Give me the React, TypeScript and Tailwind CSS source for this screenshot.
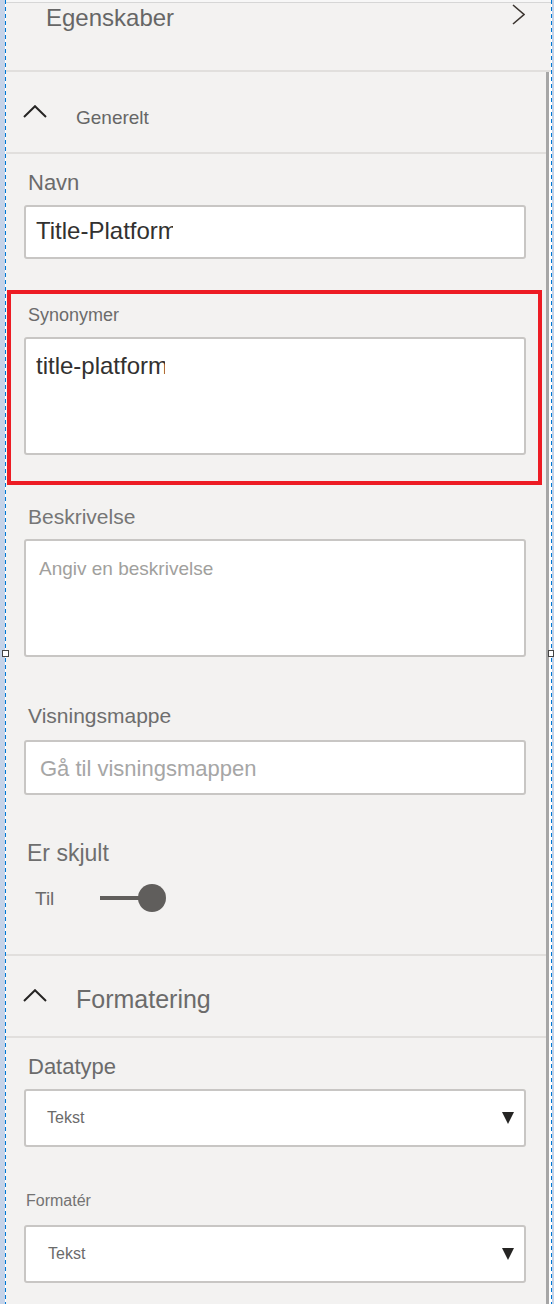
import React from "react";

function ChevronUp() {
  return (
    <svg width="24" height="13" viewBox="0 0 24 13" className="shrink-0">
      <path d="M1 12 L12 1.2 L23 12" fill="none" stroke="#252423" strokeWidth="2" />
    </svg>
  );
}

function ChevronRight() {
  return (
    <svg width="13" height="21" viewBox="0 0 13 21" className="shrink-0 mt-[1px]">
      <path d="M1 1 L12 10.5 L1 20" fill="none" stroke="#3b3530" strokeWidth="1.6" />
    </svg>
  );
}

function Caret() {
  return (
    <svg width="12" height="12" viewBox="0 0 12 12" className="shrink-0">
      <polygon points="0,0 12,0 6,12" fill="#252423" />
    </svg>
  );
}

const box = "bg-white border-2 border-[#c8c6c4] rounded-[3px] w-[502px]";

export default function App() {
  return (
    <div className="relative flex w-[554px] h-[1304px] bg-[#f3f2f1] overflow-hidden font-['Liberation_Sans',Arial,sans-serif]">
      <div className="w-[5px] bg-[#c5d3e8]" />
      <div className="w-[1px] bg-white bg-[repeating-linear-gradient(to_bottom,#0078d4_0px,#0078d4_4px,transparent_4px,transparent_7px)]" />

      <div className="w-[545px] flex flex-col">
        <div className="h-[2px] bg-[#f7f7f7]" />
        <div className="h-[1px] bg-[#d6d6d6]" />
        <div className="h-[67px] flex items-start justify-between pl-[40px] pr-[26px]">
          <span className="pt-[1px] text-[24px] leading-[28px] text-[#666666]">Egenskaber</span>
          <ChevronRight />
        </div>
        <div className="h-[2px] bg-[#e1dfdd]" />

        <div className="flex flex-1">
          <div className="w-[540px] flex flex-col">
            <div className="h-[80px] flex items-center pl-[17px]">
              <div className="mb-[2px]">
                <ChevronUp />
              </div>
              <span className="ml-[29px] mt-[10px] text-[19px] leading-[23px] text-[#666666]">Generelt</span>
            </div>
            <div className="h-[2px] bg-[#e1dfdd]" />

            <div className="flex flex-col pl-[18px] pr-[20px] pb-[42px]">
              <div className="mt-[16px] ml-[4px] text-[22px] leading-[26px] text-[#6b6b6b]">Navn</div>
              <div className={`${box} mt-[9px] h-[54px] pl-[10px] pt-[10px]`}>
                <span className="inline-block w-[137px] overflow-hidden whitespace-nowrap text-[24px] leading-[28px] text-[#323130]">
                  Title-Platform
                </span>
              </div>

              <div className="mt-[31px] -ml-[17px] w-[535px] h-[195px] border-4 border-[#ed1c24] pl-[13px] pt-[10px] flex flex-col">
                <div className="ml-[4px] text-[18px] leading-[22px] text-[#6b6b6b]">Synonymer</div>
                <div className={`${box} mt-[11px] h-[118px] pl-[10px] pt-[13px]`}>
                  <span className="inline-block w-[129px] overflow-hidden whitespace-nowrap text-[24px] leading-[28px] text-[#323130]">
                    title-platform
                  </span>
                </div>
              </div>

              <div className="mt-[20px] ml-[4px] text-[21px] leading-[24px] text-[#767676]">Beskrivelse</div>
              <div className={`${box} mt-[10px] h-[118px] pl-[13px] pt-[16px]`}>
                <span className="text-[19px] leading-[23px] text-[#a19f9d]">Angiv en beskrivelse</span>
              </div>

              <div className="mt-[47px] ml-[4px] text-[21px] leading-[24px] text-[#6e6e6e]">Visningsmappe</div>
              <div className={`${box} mt-[12px] h-[55px] pl-[14px] pt-[14px]`}>
                <span className="text-[22px] leading-[26px] text-[#a6a6a6]">Gå til visningsmappen</span>
              </div>

              <div className="mt-[45px] ml-[3px] text-[23px] leading-[27px] text-[#6e6e6e]">Er skjult</div>
              <div className="mt-[17px] h-[28px] flex items-center">
                <span className="ml-[11px] text-[19px] leading-[23px] text-[#6b6b6b]">Til</span>
                <div className="ml-[46px] w-[40px] h-[4px] bg-[#605e5c]" />
                <div className="-ml-[2px] w-[28px] h-[28px] rounded-full bg-[#605e5c]" />
              </div>
            </div>

            <div className="h-[2px] bg-[#e1dfdd]" />
            <div className="h-[80px] flex items-center pl-[17px]">
              <div className="mb-[2px]">
                <ChevronUp />
              </div>
              <span className="ml-[29px] mt-[6px] text-[25px] leading-[29px] text-[#6b6b6b]">Formatering</span>
            </div>
            <div className="h-[2px] bg-[#e1dfdd]" />

            <div className="flex flex-col pl-[18px] pr-[20px]">
              <div className="mt-[16px] ml-[4px] text-[22px] leading-[26px] text-[#6b6b6b]">Datatype</div>
              <div className={`${box} mt-[9px] h-[58px] flex items-center justify-between pl-[21px] pr-[10px]`}>
                <span className="text-[16px] leading-[20px] text-[#6b6b6b]">Tekst</span>
                <Caret />
              </div>

              <div className="mt-[44px] ml-[2px] text-[16px] leading-[20px] text-[#737373]">Formatér</div>
              <div className={`${box} mt-[14px] h-[58px] flex items-center justify-between pl-[22px] pr-[10px]`}>
                <span className="text-[16px] leading-[20px] text-[#6b6b6b]">Tekst</span>
                <Caret />
              </div>
            </div>
          </div>
          <div className="w-[3px] bg-[#a6a6a6]" />
          <div className="w-[2px] bg-white" />
        </div>
      </div>

      <div className="w-[1px] bg-white bg-[repeating-linear-gradient(to_bottom,#0078d4_0px,#0078d4_4px,transparent_4px,transparent_7px)]" />
      <div className="w-[2px] bg-[#c5d3e8]" />

      <div className="absolute left-[2px] top-[650px] w-[7px] h-[7px] bg-white border border-[#444444]" />
      <div className="absolute left-[548px] top-[650px] w-[6px] h-[7px] bg-white border border-[#444444]" />
    </div>
  );
}
